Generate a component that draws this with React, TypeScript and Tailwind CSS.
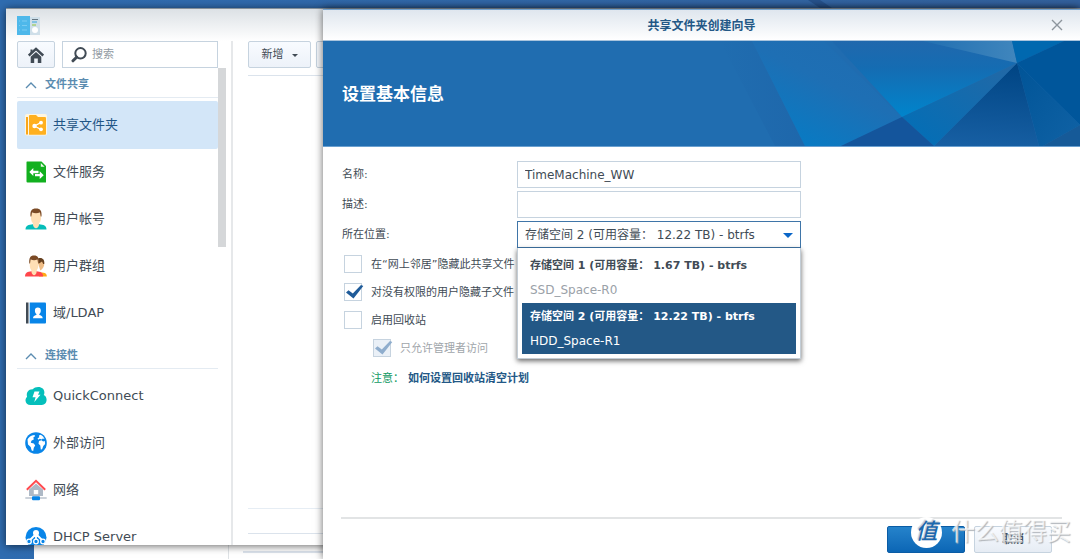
import type { ReactNode } from "react";

const SharedFolderIcon = () => (
  <svg viewBox="0 0 22 22" className="size-[22px] shrink-0" aria-hidden="true">
    <rect x="0" y="0" width="22" height="21.500" rx="2" fill="#fff6e0" />
    <path d="M1 3h2v17.500H1z" fill="#f9a61a" />
    <path d="M4 2q0-1 1-1h6l2 2h7q1 0 1 1v16q0 .8-1 .8H4z" fill="#ffb01f" />
    <path d="M16 8.500 9.500 12l6.500 3.500" stroke="#fff" strokeWidth="1.300" fill="none" />
    <circle cx="9.500" cy="12" r="2.200" fill="#fff" />
    <circle cx="16" cy="8.700" r="1.900" fill="#fff" />
    <circle cx="16" cy="15.300" r="1.900" fill="#fff" />
  </svg>
);

const FileServiceIcon = () => (
  <svg viewBox="0 0 22 22" className="size-[22px] shrink-0" aria-hidden="true">
    <path d="M2 .5h14.500L21 5v16q0 .5-.5.5h-18q-1 0-1-1V1.500q0-1 .5-1z" fill="#12b01f" />
    <path d="M15.800 2v3.800h3.800z" fill="#e9f9e9" />
    <path d="M4.300 11 8.300 7v2.800h5.200v2.400H8.300V15z" fill="#fff" />
    <path d="M18.700 14.200 14.700 18v-2.700H10v-2.400h4.700v-2.700z" fill="#fff" />
  </svg>
);

const Person = ({ shirt }: { shirt: string }) => (
  <>
    <path d="M.5 21.500c0-4 3-4.800 7.500-5.300h6c4.500.5 7.500 1.300 7.500 5.300z" fill={shirt} />
    <path d="M8 13h6v3.500c0 2-1.500 3.700-3 3.700s-3-1.700-3-3.700z" fill="#ffdfb5" />
    <path d="M6 5h10v5c0 4-2.500 6.700-5 6.700S6 14 6 10z" fill="#ffdfb5" />
    <path d="M5.500 8.500C5 3 6.500.5 11 .5s6 2.500 5.500 8h-.8l-.7-4q-4 1.300-8 0l-.7 4z" fill="#7b4a25" />
  </>
);

const UserIcon = () => (
  <svg viewBox="0 0 22 22" className="size-[22px] shrink-0" aria-hidden="true">
    <Person shirt="#06bdb9" />
  </svg>
);

const GroupIcon = () => (
  <svg viewBox="0 0 22 22" className="size-[22px] shrink-0" aria-hidden="true">
    <path d="M14 21.500v-4c5 0 7.800 0 7.800 4z" fill="#ffa914" />
    <path d="M12 5c3-2 7.500-1 7.300 3.500 0 3-1.500 5.500-4 7z" fill="#efbd86" />
    <path d="M13 3.500c4-1.500 7 1 6.200 5.500h-1L17 6.500l-3 2z" fill="#66401f" />
    <path d="M15 16.500 17 19l-2 1z" fill="#efbd86" />
    <g transform="translate(-.4 0) scale(.86 1)">
      <Person shirt="#ff464b" />
    </g>
  </svg>
);

const LdapIcon = () => (
  <svg viewBox="0 0 22 22" className="size-[22px] shrink-0" aria-hidden="true">
    <path d="M1 .5h2.500v21H1z" fill="#414b55" />
    <path d="M4.700.5H20q1 0 1 1v19q0 1-1 1H4.700z" fill="#0885e8" />
    <path d="M12.800 5.500c2 0 3 1.200 3 3.200 0 1.500-.7 2.600-1.500 3.200v1.200c1.500.5 3.400.8 3.400 3.200H8c0-2.400 1.900-2.700 3.400-3.200v-1.200c-.8-.6-1.500-1.700-1.500-3.200 0-2 1-3.200 2.900-3.200z" fill="#fff" />
  </svg>
);

const QuickConnectIcon = () => (
  <svg viewBox="0 0 22 22" className="size-[22px] shrink-0" aria-hidden="true">
    <path d="M5.500 20C2.500 20 .5 18 .5 15.500c0-1.800.8-3 1.600-3.800C.8 7.500 3.800 4 7.800 4.300 9 2.700 11 2 13.200 2c3.800 0 6.200 2.400 6.200 5.400 0 1-.2 1.800-.7 2.600 1.800.8 2.900 2.600 2.900 4.800 0 3-2 5.200-4.800 5.200z" fill="#05bfbb" />
    <path d="M9.500 6.500h5L13 9.800h2.500L9.300 17l1.300-4.800H7.500z" fill="#fff" />
  </svg>
);

const GlobeIcon = () => (
  <svg viewBox="0 0 22 22" className="size-[22px] shrink-0" aria-hidden="true">
    <circle cx="11" cy="11" r="10.800" fill="#0885e8" />
    <path d="M2.500 7.500C3.500 5.200 6 3.400 9.300 3l.9 1-2 1.700.8 1.500-2.600 1.600-.6 2 3 .7 1.400 2-1.400 2.200-.6 3.300-1.500-.5-1-3.500L3 12.500z" fill="#fff" />
    <path d="m14 3.500 1.500-.7c2 .9 3.300 2.400 4 4.200l-1.700-.4-1 .8-2-.6-1.300 1-1-1.300 1.700-1.200z" fill="#fff" />
    <path d="m14 9 2.500-.8 1.600 1.300 1.700-.6.3 3-1.800 2-1.200 3.300-1.300.3-.5-4-1.800-1.800z" fill="#fff" />
  </svg>
);

const NetworkIcon = () => (
  <svg viewBox="0 0 22 22" className="size-[22px] shrink-0" aria-hidden="true">
    <path d="M4 10.500 11 4.500l7 6V17H4z" fill="#aeb9c6" />
    <path d="M8.800 11h4.400v4.200H8.800z" fill="#fff" />
    <path d="M1.800 10.800 11 1.800l9.200 9" stroke="#ff4a4f" strokeWidth="2" fill="none" />
    <path d="M.3 19h21.400" stroke="#aab5c1" strokeWidth="1.200" />
    <rect x="7" y="17.300" width="8" height="4" rx="1" fill="#0885e8" />
  </svg>
);

const DhcpIcon = () => (
  <svg viewBox="0 0 22 22" className="size-[22px] shrink-0" aria-hidden="true">
    <circle cx="11" cy="11.500" r="10.500" fill="#0885e8" />
    <circle cx="11" cy="7" r="3" fill="#fff" />
    <path d="M11 9v6M10 9l-5 5M12 9l5 5" stroke="#fff" strokeWidth="1.800" />
    <g fill="#0885e8" stroke="#fff" strokeWidth="1.300">
      <circle cx="4" cy="15.500" r="2.300" />
      <circle cx="11" cy="15.500" r="2.300" />
      <circle cx="18" cy="15.500" r="2.300" />
    </g>
  </svg>
);

type Item = { label: string; icon: ReactNode; active?: boolean };

const sections: { title: string; items: Item[] }[] = [
  {
    title: "文件共享",
    items: [
      { label: "共享文件夹", icon: <SharedFolderIcon />, active: true },
      { label: "文件服务", icon: <FileServiceIcon /> },
      { label: "用户帐号", icon: <UserIcon /> },
      { label: "用户群组", icon: <GroupIcon /> },
      { label: "域/LDAP", icon: <LdapIcon /> },
    ],
  },
  {
    title: "连接性",
    items: [
      { label: "QuickConnect", icon: <QuickConnectIcon /> },
      { label: "外部访问", icon: <GlobeIcon /> },
      { label: "网络", icon: <NetworkIcon /> },
      { label: "DHCP Server", icon: <DhcpIcon /> },
    ],
  },
];

function Sidebar() {
  return (
    <aside className="flex w-[227px] shrink-0 flex-col border-r-2 border-[#e6e8ea] pl-[11px]">
      <div className="mr-2 flex shrink-0 gap-[7px] pr-[5px]">
        <button
          type="button"
          aria-label="主页"
          className="flex h-[27px] w-[38px] items-center justify-center rounded-[2px] border border-[#c6d3df] bg-linear-to-b from-[#f8fbff] to-[#edf2f9]"
        >
          <svg viewBox="0 0 16 16" className="size-4" aria-hidden="true">
            <path d="M.8 8.500 8 1.800l7.200 6.700" stroke="#414b55" strokeWidth="2.400" fill="none" />
            <path d="M2.700 9.800 8 5l5.300 4.800V16h-3.500v-4.500H6.200V16H2.700z" fill="#414b55" />
            <path d="M2.500 2.500h2v3l-2 1.500z" fill="#414b55" />
          </svg>
        </button>
        <label className="flex h-[27px] min-w-0 flex-1 items-center gap-[5px] border border-[#c6d3df] bg-white pl-2">
          <svg viewBox="0 0 16 16" className="size-4 shrink-0" aria-hidden="true">
            <circle cx="9.500" cy="6.300" r="5.200" stroke="#414b55" strokeWidth="2" fill="none" />
            <path d="M5.600 10.200 2 13.800" stroke="#414b55" strokeWidth="3" strokeLinecap="round" />
          </svg>
          <input
            type="text"
            aria-label="搜索"
            placeholder="搜索"
            className="w-full min-w-0 pt-[2px] text-[11px] outline-none placeholder:text-[#929ba3]"
          />
        </label>
      </div>
      <div className="flex min-h-0 flex-1 items-start">
        <nav className="h-full min-w-0 flex-1 overflow-hidden">
          {sections.map((section) => (
            <section key={section.title} className="pb-[3px]">
              <h2 className="mb-[3px] h-[30px] border-b border-[#e4ebf2]">
                <button type="button" className="flex h-full w-full items-center gap-2 pt-[5px] pl-2 text-[11px] font-bold text-[#5b8cb0]">
                  <svg viewBox="0 0 12 8" className="h-2 w-3" aria-hidden="true">
                    <path d="m1 7 5-5 5 5" stroke="currentColor" strokeWidth="1.400" fill="none" />
                  </svg>
                  {section.title}
                </button>
              </h2>
              <ul>
                {section.items.map((item) => (
                  <li key={item.label} className="-mb-px">
                    <a
                      href="#"
                      className={
                        item.active
                          ? "flex h-12 items-center gap-[6px] rounded-[2px] bg-[#d3e6f8] pl-2 text-[13px] text-[#1f5585]"
                          : "flex h-12 items-center gap-[6px] pl-2 text-[13px] text-[#414b55]"
                      }
                    >
                      {item.icon}
                      <span>{item.label}</span>
                    </a>
                  </li>
                ))}
              </ul>
            </section>
          ))}
        </nav>
        <div className="mr-[5px] h-[179px] w-2 shrink-0 bg-[#d5d7d9]" />
      </div>
    </aside>
  );
}

function ControlPanel() {
  return (
    <div className="absolute top-2 right-0 bottom-[14px] left-[6px] flex flex-col border-t border-[#858f98] bg-white shadow-[0_1px_8px_rgba(0,0,0,0.6)]">
      <header className="flex h-8 shrink-0 items-center bg-linear-to-b from-[#dce1e5] to-white pl-[11px]">
        <svg viewBox="0 0 23 19" className="h-[19px] w-[23px]" aria-hidden="true">
          <path d="M12 1h11v18H12z" fill="#cfdfe9" />
          <path d="M0 0h13v19H0z" fill="#4eb8ea" />
          <path d="M2 5h1m2 0h5M2 9.500h1m2 0h5M2 14h1m2 0h5" stroke="#7accf2" />
          <path d="M15 3.500h6" stroke="#647580" />
          <path d="M15 6h5" stroke="#36a5dc" />
          <path d="M15 9h4" stroke="#91c83e" />
          <circle cx="18" cy="14" r="3" fill="#fff" />
        </svg>
      </header>
      <div className="flex min-h-0 flex-1">
        <Sidebar />
        <main className="flex min-w-0 flex-1 flex-col pl-[15px]">
          <div className="flex h-[35px] shrink-0 items-start gap-[5px] border-b border-[#dbe3ec]">
            <button
              type="button"
              className="flex h-[27px] w-[63px] items-center justify-center gap-2 rounded-[2px] border border-[#c6d3df] bg-linear-to-b from-[#f8fbff] to-[#edf2f9] pt-[2px] text-[11px] text-[#414b55]"
            >
              新增
              <svg viewBox="0 0 6 3" className="h-[3px] w-[6px]" aria-hidden="true">
                <path d="M0 0h6L3 3z" fill="#414b55" />
              </svg>
            </button>
            <button
              type="button"
              aria-label="编辑"
              className="h-[27px] w-[63px] rounded-[2px] border border-[#c6d3df] bg-[#f5f8fc]"
            />
          </div>
          <div className="flex-1 border-b border-[#e6edf4]" />
          <div className="mb-[11px] h-[25px] shrink-0 border-b border-[#dbe3ec]" />
        </main>
      </div>
    </div>
  );
}

function BannerArt() {
  return (
    <svg viewBox="0 0 380 105" className="h-[105px] w-[380px]" aria-hidden="true">
      <defs>
        <linearGradient id="bright" x1="0" y1="0" x2="0" y2="1">
          <stop offset="0" stopColor="#2068ad" />
          <stop offset=".35" stopColor="#156cb2" />
          <stop offset="1" stopColor="#0085cc" />
        </linearGradient>
        <linearGradient id="left" x1="1" y1="0" x2=".3" y2="1">
          <stop offset="0" stopColor="#206cb0" />
          <stop offset=".5" stopColor="#1e6fb4" />
          <stop offset="1" stopColor="#077bc4" />
        </linearGradient>
        <linearGradient id="fade" x1="0" y1="0" x2="1" y2="0">
          <stop offset="0" stopColor="#206db0" />
          <stop offset="1" stopColor="#1e67ab" />
        </linearGradient>
        <linearGradient id="deep" x1=".5" y1="0" x2=".4" y2="1">
          <stop offset="0" stopColor="#004584" />
          <stop offset="1" stopColor="#175fa3" />
        </linearGradient>
        <linearGradient id="mid" x1="1" y1="0" x2="0" y2="1">
          <stop offset="0" stopColor="#2468a5" />
          <stop offset="1" stopColor="#006fb8" />
        </linearGradient>
        <linearGradient id="pale" x1="0" y1="0" x2="1" y2="0">
          <stop offset="0" stopColor="#216fb1" />
          <stop offset="1" stopColor="#4086bd" />
        </linearGradient>
        <linearGradient id="side" x1="0" y1="0" x2="1" y2="1">
          <stop offset="0" stopColor="#005497" />
          <stop offset="1" stopColor="#1062a5" />
        </linearGradient>
      </defs>
      <path d="M20 0h32l53 105H75z" fill="url(#fade)" />
      <path d="M52 0h90l60 76-61 29h-36z" fill="url(#left)" />
      <path d="M130 0h93l94 22-115 54z" fill="url(#bright)" />
      <path d="M202 76 132 0h-8z" fill="#206cb0" />
      <path d="M223 0h89l5 22z" fill="url(#pale)" />
      <path d="M312 0h52l-47 22z" fill="#0068af" />
      <path d="M317 22 364 0h16v84z" fill="#00569b" />
      <path d="m317 22 63 62-37 21h-4z" fill="url(#side)" />
      <path d="m317 22 22 83H234z" fill="url(#deep)" />
      <path d="m317 22-83 83-32-29z" fill="url(#mid)" />
      <path d="m202 76 32 29h-93z" fill="#14559c" />
      <path d="m343 105 37-21v21z" fill="#165a98" />
    </svg>
  );
}

function CheckRow({ id, label, checked, disabled }: { id: string; label: string; checked?: boolean; disabled?: boolean }) {
  return (
    <div className={disabled ? "flex h-7 items-center gap-[9px] pl-[31px]" : "flex h-7 items-center gap-[9px] pl-[2px]"}>
      <span className="relative size-[18px] shrink-0">
        <input
          id={id}
          type="checkbox"
          defaultChecked={checked}
          disabled={disabled}
          className="block size-[18px] appearance-none border border-[#c6d3df] bg-white disabled:bg-[#eaf0f7]"
        />
        {checked && (
          <svg viewBox="0 0 18 18" className="pointer-events-none absolute top-0 left-[2px] size-[18px]" aria-hidden="true">
            <path d="M0 9.500 2.500 7.300l4.300 3.200L15 2l2.300 1L7.500 15.500z" fill={disabled ? "#8fadcd" : "#1f5b99"} />
          </svg>
        )}
      </span>
      <label
        htmlFor={id}
        className={
          disabled
            ? "pt-[2px] text-[11px] whitespace-nowrap text-[#a0a5aa]"
            : "pt-[2px] text-[11px] whitespace-nowrap text-[#414b55]"
        }
      >
        {label}
      </label>
    </div>
  );
}

const volumes = [
  { title: "存储空间 1 (可用容量： 1.67 TB) - btrfs", note: "SSD_Space-R0", selected: false },
  { title: "存储空间 2 (可用容量： 12.22 TB) - btrfs", note: "HDD_Space-R1", selected: true },
];

function Wizard() {
  return (
    <div role="dialog" aria-labelledby="wizard-title" className="absolute top-[9px] right-0 bottom-0 left-[323px] flex flex-col bg-white shadow-[0_0_8px_rgba(0,0,0,0.6)]">
      <header className="flex h-8 shrink-0 items-center border-t border-b border-t-[#75a2cc] border-b-[#a9c4dd] bg-linear-to-b from-[#dfe6ee] to-white px-4">
        <h1 id="wizard-title" className="flex-1 pt-[2px] pl-[14px] text-center text-[12px] font-bold text-[#235886]">
          共享文件夹创建向导
        </h1>
        <button type="button" aria-label="关闭" className="flex size-[14px] items-center justify-center">
          <svg viewBox="0 0 12 12" className="size-3" aria-hidden="true">
            <path d="m1 1 10 10M11 1 1 11" stroke="#8d959d" strokeWidth="1.400" />
          </svg>
        </button>
      </header>
      <div className="flex h-[106px] shrink-0 items-center justify-between border-b border-[#6aa0d0] bg-[#206db0]">
        <h2 className="shrink-0 pt-[2px] pl-[19px] text-[17px] font-bold text-white">设置基本信息</h2>
        <BannerArt />
      </div>
      <form className="flex-1 px-[19px] pt-[14px]" onSubmit={(event) => event.preventDefault()}>
        <div className="grid grid-cols-[175px_284px] items-center gap-y-[3px] text-[#414b55]">
          <label htmlFor="name" className="pt-[2px] text-[11px]">名称:</label>
          <input id="name" type="text" defaultValue="TimeMachine_WW" className="h-[27px] border border-[#c6d3df] px-[7px] text-[12px] outline-none" />
          <label htmlFor="desc" className="pt-[2px] text-[11px]">描述:</label>
          <input id="desc" type="text" className="h-[27px] border border-[#c6d3df] px-[7px] text-[12px] outline-none" />
          <label htmlFor="location" className="pt-[2px] text-[11px]">所在位置:</label>
          <div className="relative">
            <select
              id="location"
              defaultValue={volumes[1].title}
              className="block h-[27px] w-full appearance-none border border-[#3f75a8] bg-white px-[7px] text-[12px] outline-none"
            >
              {volumes.map((volume) => (
                <option key={volume.title}>{volume.title}</option>
              ))}
            </select>
            <svg viewBox="0 0 10 5" className="pointer-events-none absolute top-[12px] right-2 h-[5px] w-[10px]" aria-hidden="true">
              <path d="M0 0h10L5 5z" fill="#0a66c8" />
            </svg>
            <ul role="listbox" aria-label="所在位置" className="absolute top-[27px] left-0 z-10 w-full border border-t-0 border-[#c3cdd6] bg-white p-1 text-[#414b55] shadow-[0_2px_5px_rgba(0,0,0,0.6)]">
              {volumes.map((volume) => (
                <li
                  key={volume.title}
                  role="option"
                  aria-selected={volume.selected}
                  className={volume.selected ? "h-[51px] bg-[#235886] px-2 pt-px text-white" : "h-[51px] px-2 pt-px"}
                >
                  <div className="text-[11px] leading-[26px] font-bold whitespace-nowrap">{volume.title}</div>
                  <div className={volume.selected ? "text-[12px] leading-[22px]" : "text-[12px] leading-[22px] text-[#9aa1a8]"}>
                    {volume.note}
                  </div>
                </li>
              ))}
            </ul>
          </div>
        </div>
        <div className="pt-[2px]">
          <CheckRow id="hide" label="在“网上邻居”隐藏此共享文件" />
          <CheckRow id="hide-sub" label="对没有权限的用户隐藏子文件" checked />
          <CheckRow id="recycle" label="启用回收站" />
          <CheckRow id="admin-only" label="只允许管理者访问" checked disabled />
        </div>
        <p className="flex h-8 items-center gap-1 pt-[2px] pl-[29px] text-[11px]">
          <span className="text-[#109a63]">注意：</span>
          <a href="#" className="font-bold text-[#235886]">如何设置回收站清空计划</a>
        </p>
      </form>
      <footer className="mr-[18px] ml-[18px] flex h-[42px] shrink-0 justify-end gap-[9px] border-t-2 border-[#e2e4e5] pt-[7px] pr-[10px]">
        <button
          type="button"
          aria-label="下一步"
          className="h-[27px] w-[78px] rounded-[2px] border border-[#0a5ca5] bg-linear-to-b from-[#2583cb] to-[#0b66b5]"
        />
        <button type="button" className="h-[27px] w-[78px] rounded-[2px] border border-[#c6d3df] bg-linear-to-b from-[#f8fbff] to-[#e6ecf4] pt-[2px] text-[11px] font-bold text-[#414b55]">
          取消
        </button>
      </footer>
    </div>
  );
}

export default function App() {
  return (
    <div className="relative h-screen overflow-hidden bg-linear-to-r from-[#2f6cb0] to-[#33619e] font-['DejaVu_Sans','Noto_Sans_CJK_SC',sans-serif]">
      <svg className="absolute top-0 left-[808px] h-2 w-6" viewBox="0 0 24 8" aria-hidden="true">
        <path d="M0 0h12l12 8H12z" fill="#27528c" />
      </svg>
      <div className="absolute right-0 bottom-0 left-[34px] flex h-6 items-end bg-white">
        <div className="h-full w-[195px] border-r border-[#dfe3e6]" />
        <div className="mb-[6px] ml-[14px] flex-1 border-b-2 border-[#dbe3ec]" />
      </div>
      <ControlPanel />
      <Wizard />
      <div className="pointer-events-none absolute right-[9px] bottom-[7px] z-20 flex items-center gap-[9px]">
        <span className="flex size-[31px] items-center justify-center rounded-full bg-white text-[22px] leading-none font-medium text-[#1d68ad] italic [text-shadow:-1px_-1px_1px_#c4cad0]">
          值
        </span>
        <span className="text-[24px] leading-[40px] text-white/70 [text-shadow:1px_1px_1px_#b0b5ba]">什么值得买</span>
      </div>
    </div>
  );
}
